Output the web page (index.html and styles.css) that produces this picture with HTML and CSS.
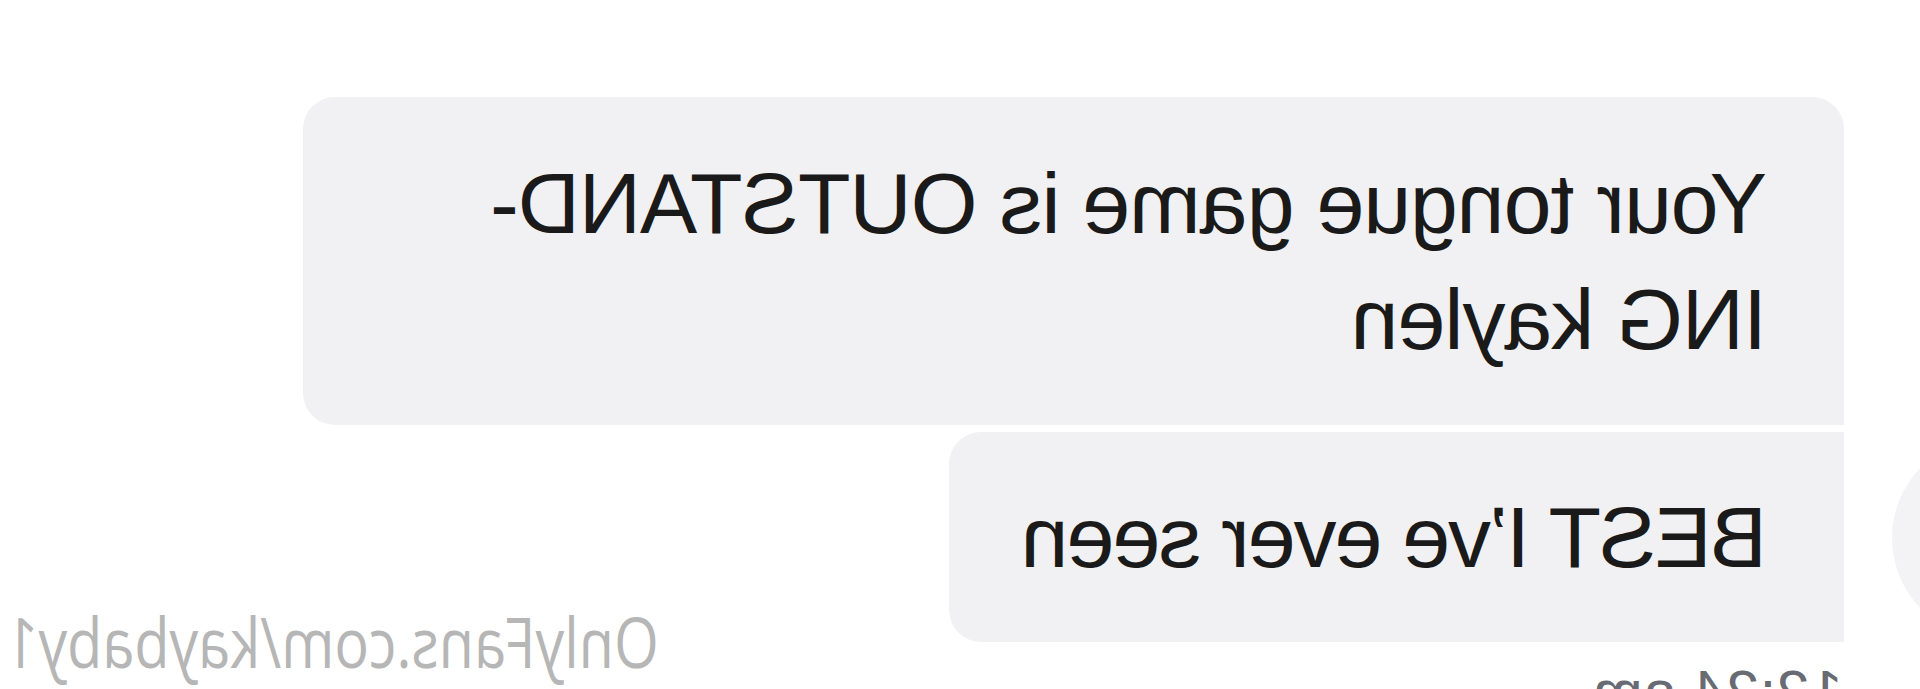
FILE: index.html
```html
<!DOCTYPE html>
<html lang="en">
<head>
  <meta charset="UTF-8">
  <title>Chat</title>
  <link rel="stylesheet" href="styles.css">
</head>
<body>

<div class="screen">
  <div class="thread">
    <div class="group">
      <div class="avatar"></div>
      <div class="bubbles">
        <div class="bubble bubble-first">Your tongue game is OUTSTAND-<br>ING kaylen</div>
        <div class="bubble bubble-last">BEST I’ve ever seen</div>
      </div>
    </div>
    <div class="time">12:24 am</div>
  </div>

  <div class="watermark">OnlyFans.com/kaybaby1</div>
</div>

</body>
</html>
```

FILE: styles.css
```css
body {
  margin: 0;
  background: #fff;
  overflow: hidden;
}

/* the screenshot is mirrored, so the whole screen is flipped */
.screen {
  position: relative;
  width: 1920px;
  height: 689px;
  overflow: hidden;
  background: #fff;
  transform: scaleX(-1);
  font-family: "Liberation Sans", Arial, sans-serif;
}

.thread {
  padding-top: 97px;
}

.group {
  display: flex;
  align-items: flex-end;
  gap: 48px;
}

.avatar {
  flex: none;
  width: 202px;
  height: 202px;
  margin-left: -174px;
  margin-bottom: 3px;
  border-radius: 50%;
  background: #f3f3f5;
}

.bubbles {
  display: flex;
  flex-direction: column;
  align-items: flex-start;
  gap: 7px;
}

.bubble {
  box-sizing: border-box;
  padding: 47px 56px 47px 77px;
  background: #f1f1f3;
  color: #1a1a1a;
  font-size: 86px;
  line-height: 116px;
  letter-spacing: -1px;
  border-radius: 32px;
}

.bubble-first {
  width: 1541px;
  padding-top: 48px;
  padding-bottom: 48px;
  border-bottom-left-radius: 0;
}

.bubble-last {
  padding-right: 74px;
  letter-spacing: -2px;
  border-top-left-radius: 0;
  border-bottom-left-radius: 0;
}

.time {
  margin-top: 18px;
  padding-left: 77px;
  color: #686b73;
  font-size: 60px;
  line-height: 64px;
}

.watermark {
  position: absolute;
  top: 606px;
  right: 6px;
  color: #b6b6b6;
  font-family: "Open Sans", sans-serif;
  font-size: 70px;
  line-height: 70px;
  transform: scaleX(0.82);
  transform-origin: right center;
}
```
